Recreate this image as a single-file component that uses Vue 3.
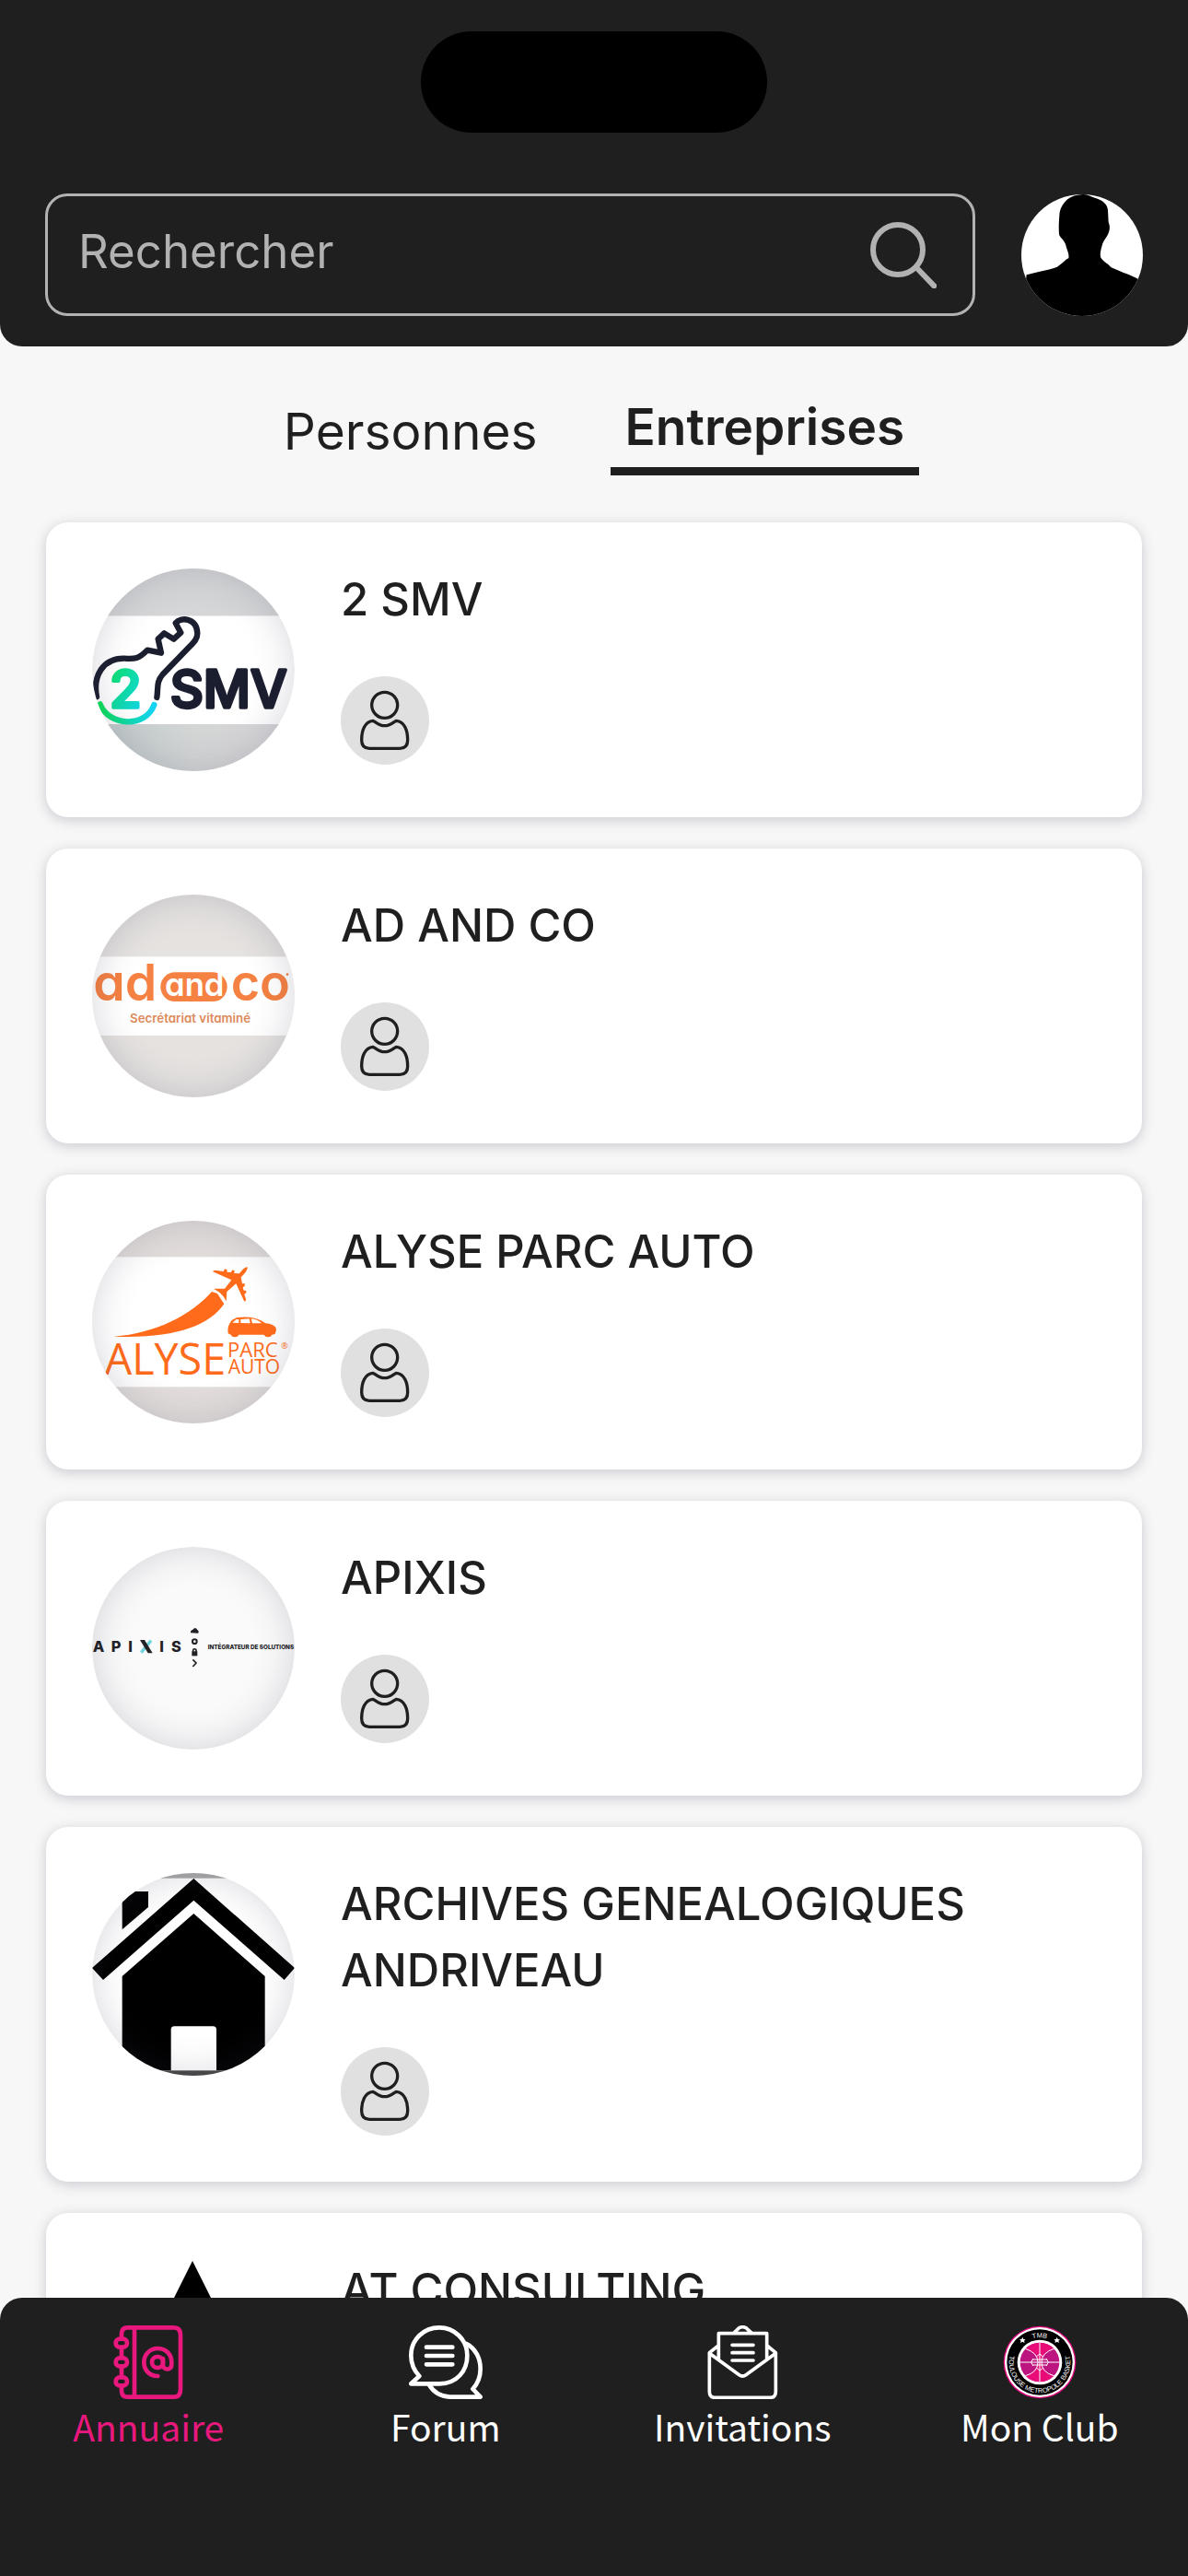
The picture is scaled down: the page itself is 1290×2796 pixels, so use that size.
<template>
    <div class="app">
        <header class="top-bar">
            <div class="island"></div>
            <div class="search-row">
                <div class="search-box">
                    <input id="search" v-model="query" type="text" placeholder="Rechercher" />
                    <label for="search" class="search-label">
                        <svg class="search-icon" viewBox="75 153 216 216" role="img" aria-label="Rechercher">
                            <circle cx="165" cy="243" r="81" />
                            <path d="M227 303L283 361" />
                        </svg>
                    </label>
                </div>
                <a href="#profil" class="avatar" aria-label="Profil">
                    <svg viewBox="567 60 396 396" aria-hidden="true">
                        <rect x="567" y="60" width="396" height="396" fill="#fff" />
                        <path d="M690 190C688 165 690 140 692 118C700 85 725 60 768 60C785 60 790 66 806 71C832 78 848 92 849 112L851 150C856 162 856 172 851 186C846 200 836 208 832 220C826 240 822 255 826 266C835 280 850 285 860 298L900 315C925 324 938 330 948 336L963 456H567L584 322C610 314 650 308 684 296C700 286 708 274 721 268C724 252 714 238 711 222C704 206 692 200 690 190Z" />
                    </svg>
                </a>
            </div>
        </header>

        <nav class="tabs">
            <button v-for="tab in tabs" :key="tab" type="button" class="tab" :class="{ active: tab === activeTab }"
                @click="activeTab = tab">{{ tab }}</button>
        </nav>

        <main class="list">
            <article v-for="item in filtered" :key="item.id" class="card">
                <div class="logo" :class="{ flat: item.id === 'atconsulting' }">
                    <svg v-if="item.id === 'smv'" viewBox="60 50 660 660" aria-hidden="true">
                        <defs>
                            <linearGradient id="smvBg" x1="0" y1="0" x2="1" y2="0">
                                <stop offset="0" stop-color="#bfcaca" />
                                <stop offset="0.5" stop-color="#d3d5d5" />
                                <stop offset="1" stop-color="#d9d6d9" />
                            </linearGradient>
                            <linearGradient id="smvTwo" x1="0" y1="0" x2="1" y2="1">
                                <stop offset="0" stop-color="#0be35a" />
                                <stop offset="1" stop-color="#14d3f5" />
                            </linearGradient>
                            <linearGradient id="smvArc" x1="0" y1="0" x2="1" y2="0">
                                <stop offset="0" stop-color="#0be35a" />
                                <stop offset="1" stop-color="#14d3f5" />
                            </linearGradient>
                        </defs>
                        <rect x="60" y="50" width="660" height="155" fill="#d5d6d7" />
                        <rect x="60" y="205" width="660" height="352" fill="#fff" />
                        <rect x="60" y="557" width="660" height="153" fill="url(#smvBg)" />
                        <g fill="none" stroke-width="19" stroke-linecap="round" stroke-linejoin="round">
                            <path stroke="#1b1e2f" d="M75 468C62 400 95 342 165 343C200 345 212 345 240 316L285 325L275 280L295 261L326 280L349 259L332 228C350 206 402 212 403 262C403 280 392 290 380 302L290 395C268 420 276 440 271 470" />
                            <path stroke="url(#smvArc)" d="M86 492C115 565 235 570 262 494" />
                        </g>
                        <text x="117" y="503" class="smv-text" fill="url(#smvTwo)" stroke="url(#smvTwo)">2</text>
                        <text x="314" y="503" class="smv-text" fill="#1b1e2f" stroke="#1b1e2f">SMV</text>
                    </svg>

                    <svg v-else-if="item.id === 'adandco'" viewBox="60 47 660 660" aria-hidden="true">
                        <rect x="60" y="47" width="660" height="660" fill="#e5e2e0" />
                        <rect x="60" y="249" width="660" height="257" fill="#fff" />
                        <g class="adco-text" fill="#f58142">
                            <text x="64" y="393" font-size="166">ad</text>
                            <text x="512" y="393" font-size="162">co</text>
                            <rect x="283" y="300" width="217" height="95" rx="47" />
                            <text x="297" y="377" font-size="104" fill="#fff">and</text>
                            <text x="183" y="465" font-size="40" fill="#dd8a5c">Secrétariat vitaminé</text>
                            <circle cx="696" cy="307" r="4" />
                        </g>
                    </svg>

                    <svg v-else-if="item.id === 'alyse'" viewBox="60 45 660 660" aria-hidden="true">
                        <rect x="60" y="45" width="660" height="660" fill="#e2dddb" />
                        <rect x="60" y="163" width="660" height="423" fill="#fff" />
                        <g class="alyse-text" fill="#ff6b1a">
                            <path d="M130 422C270 412 385 350 450 276L468 282L490 316C440 390 320 430 130 422Z" />
                            <path d="M456 266L492 266L514 238L452 210L460 206L488 210L492 202L499 204L500 212L512 213L518 205L524 208L523 216L540 217C550 204 558 195 566 196C567 206 556 218 545 229L549 250L557 249L557 258L551 262L554 272L562 272L562 280L556 284L562 304L556 308L529 250L499 276L497 307L488 292L476 279Z" />
                            <path fill-rule="evenodd" d="M503 412C500 390 508 378 516 368L532 360C560 356 590 358 610 370L625 379C645 381 660 388 660 400L656 414L646 416A14 12 0 0 1 620 416L538 416A14 12 0 0 1 512 416ZM517 377L538 378V366H530ZM544 366V378L575 379L572 364ZM578 364L582 379H612C604 370 592 365 578 364Z" />
                            <text x="101" y="545" font-size="140">ALYSE</text>
                            <text x="501" y="488" font-size="66">PARC</text>
                            <text x="503" y="543" font-size="63">AUTO</text>
                            <text x="676" y="461" font-size="27">®</text>
                        </g>
                    </svg>

                    <svg v-else-if="item.id === 'apixis'" viewBox="60 42 660 660" aria-hidden="true">
                        <rect x="60" y="42" width="660" height="660" fill="#fafafa" />
                        <g class="apixis-text" fill="#222126">
                            <text x="62 122 178 280 318" y="384" font-size="49">APIIS</text>
                            <path d="M252 347L220 386" stroke="#6fd3dc" stroke-width="10" />
                            <path d="M216 345H231L257 388H242Z" />
                            <text x="437" y="374" font-size="19">INTÉGRATEUR DE SOLUTIONS</text>
                            <path d="M381 322C380 314 385 312 388 312C391 304 402 306 402 312C408 314 408 322 405 323Z" />
                            <circle cx="394" cy="350" r="7" fill="none" stroke="#222126" stroke-width="6" />
                            <rect x="385" y="382" width="18" height="15" />
                            <path d="M389 384V378C389 373 399 373 399 378V384M388 409L399 420L388 432" fill="none" stroke="#222126" stroke-width="5" />
                        </g>
                    </svg>

                    <svg v-else-if="item.id === 'archives'" viewBox="60 38 660 660" aria-hidden="true">
                        <rect x="60" y="38" width="660" height="660" fill="#fff" />
                        <rect x="60" y="38" width="660" height="17" fill="#ababab" />
                        <rect x="60" y="681" width="660" height="17" fill="#4a4a4a" />
                        <path d="M391 56L720 347L686 386L391 127L96 386L60 347Z" />
                        <path d="M158 98H243V149L158 222Z" />
                        <path d="M391 170L623 374V681H465V548Q465 537 454 537H328Q317 537 317 548V681H158V374Z" />
                    </svg>

                    <svg v-else viewBox="0 0 220 220" aria-hidden="true">
                        <path d="M109 2L206 196H12Z" />
                    </svg>
                </div>

                <div class="info">
                    <h2 class="name">{{ item.name }}</h2>
                    <a :href="'#' + item.id" class="contact" aria-label="Contact">
                        <svg viewBox="27 42 288 288" aria-hidden="true">
                            <circle cx="170" cy="136" r="42" />
                            <path d="M132 187C105 189 95 220 95 250C95 268 103 277 120 277H220C237 277 245 268 245 250C245 220 235 189 208 187C200 189 190 203 170 203C150 203 140 189 132 187Z" />
                        </svg>
                    </a>
                </div>
            </article>
        </main>

        <nav class="bottom-nav">
            <a href="#annuaire" class="nav-item active">
                <svg class="nav-icon" viewBox="65 72 240 240" stroke-width="14" aria-hidden="true">
                    <path d="M98 110V100Q98 79 118 79H268Q290 79 290 103V281Q290 305 268 305H118Q98 305 98 284V272M98 148V173M98 210V236M140 79V305" />
                    <rect x="79" y="116" width="37" height="27" rx="13" />
                    <rect x="79" y="178" width="37" height="27" rx="13" />
                    <rect x="79" y="241" width="37" height="27" rx="13" />
                    <circle cx="215" cy="192" r="18" />
                    <path d="M233 180V202C234 219 261 219 261 200V192C261 164 240 147 216 147C189 147 171 168 171 192C171 220 191 237 216 237" />
                </svg>
                <span>Annuaire</span>
            </a>
            <a href="#forum" class="nav-item">
                <svg class="nav-icon" viewBox="1032 72 240 240" stroke-width="14" aria-hidden="true">
                    <path d="M1039 262H1132C1188 262 1222 220 1222 170C1222 118 1180 79 1131 79C1080 79 1039 118 1039 170C1039 200 1050 220 1066 237Z" />
                    <path d="M1220 132C1250 148 1265 180 1265 213C1265 240 1256 262 1240 279L1265 305H1165C1135 303 1113 290 1099 267M1089 143H1174M1089 171H1174M1089 199H1174" />
                </svg>
                <span>Forum</span>
            </a>
            <a href="#invitations" class="nav-item">
                <svg class="nav-icon" viewBox="78 72 240 240" stroke-width="11" aria-hidden="true">
                    <path d="M121 182V98H278V182M170 97L188 80Q199 74 210 80L229 97M120 138L91 161V287Q91 307 109 307H289Q307 307 307 287V161L279 138M91 163L188 233Q199 241 210 233L307 163M165 136H234M165 161H234M165 186H234" />
                </svg>
                <span>Invitations</span>
            </a>
            <a href="#club" class="nav-item">
                <svg class="nav-icon club" viewBox="1046 71 240 240" aria-hidden="true">
                    <defs>
                        <path id="ringTop" d="M1086 191A80 80 0 0 1 1246 191" />
                        <path id="ringBottom" d="M1073 154A100 100 0 1 0 1259 154" />
                    </defs>
                    <circle cx="1166" cy="191" r="118" fill="#e5097f" />
                    <circle cx="1166" cy="191" r="114" fill="#fff" />
                    <circle cx="1166" cy="191" r="107" fill="#000" />
                    <circle cx="1166" cy="191" r="73" fill="#fff" />
                    <circle cx="1166" cy="191" r="64" fill="#bd1580" />
                    <path d="M1120 147A64 64 0 0 1 1212 147Q1180 158 1166 191Q1152 158 1120 147ZM1120 235A64 64 0 0 0 1212 235Q1180 224 1166 191Q1152 224 1120 235Z" fill="#e80b78" />
                    <path d="M1166 127V255M1102 191H1230M1120 147Q1160 160 1160 191Q1160 224 1120 235M1212 147Q1172 160 1172 191Q1172 224 1212 235M1144 180L1138 191L1144 202M1188 180L1194 191L1188 202M1156 172L1166 164L1176 172M1156 210L1166 218L1176 210M1144 182H1188M1144 200H1188" fill="none" stroke="#fff" stroke-width="3" />
                    <path d="M1110 109L1113 116L1120 117L1115 121L1117 128L1110 124L1103 128L1105 121L1100 117L1107 116Z" fill="#fff" />
                    <path d="M1222 109L1225 116L1232 117L1227 121L1229 128L1222 124L1215 128L1217 121L1212 117L1219 116Z" fill="#fff" />
                    <text class="ring-text">
                        <textPath href="#ringTop" startOffset="50%" text-anchor="middle">TMB</textPath>
                    </text>
                    <text class="ring-text">
                        <textPath href="#ringBottom" startOffset="50%" text-anchor="middle">TOULOUSE METROPOLE BASKET</textPath>
                    </text>
                </svg>
                <span>Mon Club</span>
            </a>
        </nav>
    </div>
</template>

<script setup>
import { ref, computed } from 'vue'

const query = ref('')
const tabs = ['Personnes', 'Entreprises']
const activeTab = ref('Entreprises')

const companies = [
    { id: 'smv', name: '2 SMV' },
    { id: 'adandco', name: 'AD AND CO' },
    { id: 'alyse', name: 'ALYSE PARC AUTO' },
    { id: 'apixis', name: 'APIXIS' },
    { id: 'archives', name: 'ARCHIVES GENEALOGIQUES ANDRIVEAU' },
    { id: 'atconsulting', name: 'AT CONSULTING' }
]

const filtered = computed(() =>
    companies.filter(c => c.name.toLowerCase().includes(query.value.toLowerCase()))
)
</script>

<style>
body {
    background: #f7f7f7;
}
</style>

<style scoped>
.app {
    display: flex;
    flex-direction: column;
    height: 100vh;
    overflow: hidden;
    background: #f7f7f7;
    color: #1f1f1f;
    font-family: Inter, "Liberation Sans", sans-serif;
}

.top-bar {
    flex-shrink: 0;
    padding: 34px 49px 33px;
    background: #1f1f1f;
    border-radius: 0 0 24px 24px;
}

.island {
    width: 376px;
    height: 110px;
    margin: 0 auto 66px;
    border-radius: 55px;
    background: #000;
}

.search-row {
    display: flex;
    align-items: center;
    gap: 50px;
}

.search-box {
    flex: 1;
    display: flex;
    align-items: center;
    box-sizing: border-box;
    height: 133px;
    padding: 0 39px 0 33px;
    border: 3px solid #b2b2b2;
    border-radius: 24px;
}

.search-box input {
    flex: 1;
    min-width: 0;
    padding: 0 0 8px;
    border: 0;
    outline: 0;
    background: none;
    color: #fff;
    font: 400 51px/64px Inter, "Liberation Sans", sans-serif;
}

.search-box input::placeholder {
    color: #b2b2b2;
    opacity: 1;
}

.search-label {
    display: flex;
}

.search-icon {
    width: 72px;
    height: 72px;
    fill: none;
    stroke: #b2b2b2;
    stroke-width: 18;
    stroke-linecap: round;
}

.avatar {
    width: 132px;
    height: 132px;
    border-radius: 50%;
    overflow: hidden;
}

.avatar svg,
.logo svg {
    display: block;
    width: 100%;
    height: 100%;
}

.tabs {
    flex-shrink: 0;
    display: flex;
    justify-content: center;
    align-items: center;
    gap: 63px;
    padding: 44px 0 51px;
}

.tab {
    padding: 0 16px;
    border: 0;
    background: none;
    color: #1f1f1f;
    font: 400 55px/87px Inter, "Liberation Sans", sans-serif;
    cursor: pointer;
}

.tab.active {
    border-bottom: 9px solid #1f1f1f;
    font-weight: 600;
}

.list {
    flex: 1;
    min-height: 0;
    display: flex;
    flex-direction: column;
    gap: 34px;
    margin-top: -20px;
    padding: 20px 50px 0;
    overflow-y: auto;
    scrollbar-width: none;
}

.card {
    flex-shrink: 0;
    display: flex;
    align-items: flex-start;
    gap: 50px;
    padding: 50px;
    background: #fff;
    border-radius: 24px;
    box-shadow: 0 3px 14px rgba(60, 60, 90, 0.24);
}

.logo {
    position: relative;
    flex-shrink: 0;
    width: 220px;
    height: 220px;
    border-radius: 50%;
    overflow: hidden;
}

.logo::after {
    content: '';
    position: absolute;
    inset: 0;
    border-radius: 50%;
    box-shadow: inset 0 0 40px rgba(60, 60, 90, 0.2);
}

.logo.flat::after {
    display: none;
}

.info {
    flex: 1;
    margin-top: -2px;
}

.name {
    margin: 0 0 47px;
    font-size: 49px;
    font-weight: 500;
    line-height: 72px;
}

.contact {
    display: block;
    width: 96px;
    height: 96px;
    border-radius: 50%;
    background: #e0e0e0;
}

.contact svg {
    display: block;
    fill: none;
    stroke: #1f1f1f;
    stroke-width: 10;
}

.smv-text {
    font: 500 168px Inter, sans-serif;
    stroke-width: 10;
    stroke-linejoin: round;
}

.adco-text {
    font-family: Inter, sans-serif;
    font-weight: 600;
    font-feature-settings: "cv11";
}

.alyse-text {
    font-family: "Open Sans", sans-serif;
    font-weight: 500;
}

.apixis-text {
    font-family: Inter, sans-serif;
    font-weight: 800;
}

.bottom-nav {
    position: relative;
    flex-shrink: 0;
    display: flex;
    padding: 30px 0 138px;
    background: #1f1f1f;
    border-radius: 24px 24px 0 0;
}

.nav-item {
    flex: 1;
    display: flex;
    flex-direction: column;
    align-items: center;
    gap: 4px;
    color: #fff;
    font-family: "Noto Sans CJK JP", "Noto Sans", sans-serif;
    font-size: 39px;
    line-height: 50px;
    text-decoration: none;
}

.nav-item.active {
    color: #e9187e;
}

.nav-icon {
    width: 80px;
    height: 80px;
    fill: none;
    stroke: currentColor;
    stroke-linecap: round;
    stroke-linejoin: round;
}

.club {
    stroke: none;
}

.ring-text {
    fill: #fff;
    font: 400 22px "Liberation Sans", sans-serif;
}
</style>
